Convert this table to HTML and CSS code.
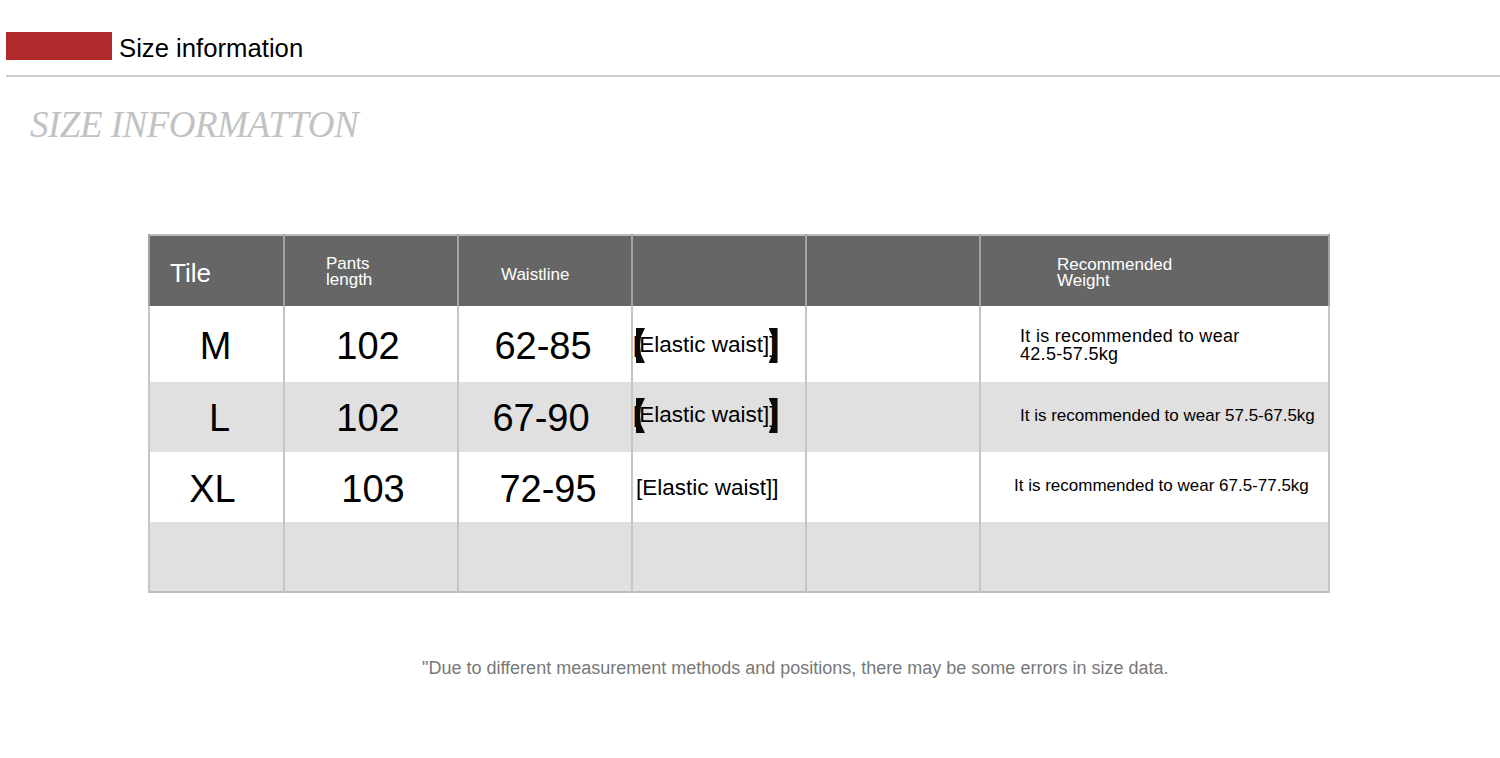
FILE: index.html
```html
<!DOCTYPE html>
<html>
<head>
<meta charset="utf-8">
<link rel="stylesheet" href="styles.css">
</head>
<body>
<div class="page">
  <div class="heading">
    <div class="red-bar"></div>
    <div class="heading-text">Size information</div>
  </div>
  <div class="rule"></div>
  <div class="subtitle">SIZE INFORMATTON</div>

  <table class="size-table">
    <colgroup>
      <col class="c1"><col class="c2"><col class="c3"><col class="c4"><col class="c5"><col class="c6">
    </colgroup>
    <thead>
      <tr class="head">
        <th class="h-tile">Tile</th>
        <th class="h-small h-pants">Pants<br>length</th>
        <th class="h-small h-waist">Waistline</th>
        <th></th>
        <th></th>
        <th class="h-small h-weight">Recommended<br>Weight</th>
      </tr>
    </thead>
    <tbody>
      <tr class="row white r1">
        <td class="val">M</td>
        <td class="val">102</td>
        <td class="val">62-85</td>
        <td class="elastic"><span class="waist bold">[Elastic waist]]</span></td>
        <td></td>
        <td class="weight w1">It is recommended to wear<br>42.5-57.5kg</td>
      </tr>
      <tr class="row grey r2">
        <td class="val">L</td>
        <td class="val">102</td>
        <td class="val">67-90</td>
        <td class="elastic e2"><span class="waist bold">[Elastic waist]]</span></td>
        <td></td>
        <td class="weight w2">It is recommended to wear 57.5-67.5kg</td>
      </tr>
      <tr class="row white r3">
        <td class="val">XL</td>
        <td class="val">103</td>
        <td class="val">72-95</td>
        <td class="elastic e3"><span class="waist">[Elastic waist]]</span></td>
        <td></td>
        <td class="weight w3">It is recommended to wear 67.5-77.5kg</td>
      </tr>
      <tr class="row grey r4">
        <td></td><td></td><td></td><td></td><td></td><td></td>
      </tr>
    </tbody>
  </table>

  <p class="note">"Due to different measurement methods and positions, there may be some errors in size data.</p>
</div>
</body>
</html>
```

FILE: styles.css
```css
html, body {
  margin: 0;
  padding: 0;
  background: #ffffff;
}

body {
  font-family: "Liberation Sans", Arial, sans-serif;
  color: #000;
}

.page {
  width: 1500px;
  height: 758px;
  overflow: hidden;
}

.heading {
  display: flex;
  align-items: center;
  padding: 32px 0 0 6px;
  height: 28px;
}

.red-bar {
  width: 106px;
  height: 28px;
  background: #b02a2c;
}

.heading-text {
  margin-left: 7px;
  font-size: 25.7px;
  line-height: 28px;
  position: relative;
  top: 2px;
}

.rule {
  margin: 15px 0 0 6px;
  height: 2px;
  background: #cbcbcb;
}

.subtitle {
  margin: 26px 0 0 30px;
  font-family: "Liberation Serif", "Times New Roman", serif;
  font-style: italic;
  font-size: 37px;
  line-height: 44px;
  color: #c2c2c2;
  letter-spacing: -0.5px;
}

.size-table {
  margin: 87px 0 0 148px;
  border-collapse: collapse;
  table-layout: fixed;
  width: 1180px;
  border: 2px solid #bdbdbd;
}

.c1 { width: 135px; }
.c2 { width: 174px; }
.c3 { width: 174px; }
.c4 { width: 174px; }
.c5 { width: 174px; }
.c6 { width: 349px; }

.size-table th,
.size-table td {
  padding: 0;
  border-left: 2px solid #c6c6c6;
  border-right: 2px solid #c6c6c6;
  vertical-align: middle;
}

.head {
  height: 71px;
  background: #666666;
}

.head th {
  color: #ffffff;
  font-weight: normal;
  text-align: left;
  border-left-color: #a3a3a3;
  border-right-color: #a3a3a3;
}

.h-tile {
  font-size: 26px;
  padding-left: 20px !important;
  padding-top: 4px !important;
}

.h-small {
  font-size: 17px;
  line-height: 16px;
}

.h-pants {
  padding-left: 41px !important;
  padding-top: 2px !important;
}

.h-waist {
  padding-left: 42px !important;
  padding-top: 8px !important;
}

.h-weight {
  padding-left: 76px !important;
  padding-top: 3px !important;
}

.row.white { background: #ffffff; }
.row.grey { background: #e0e0e0; }

.r1 { height: 76px; }
.r2 { height: 70px; }
.r3 { height: 70px; }
.r4 { height: 70px; }

.val {
  text-align: center;
  font-size: 38px;
}

.r1 .val { padding-top: 4px !important; }
.r2 .val { padding-top: 2px !important; }
.r3 .val { padding-top: 4px !important; }

.r1 .val:nth-child(1) { padding-right: 2px !important; }
.r2 .val:nth-child(1) { padding-left: 6px !important; }
.r3 .val:nth-child(1) { padding-right: 8px !important; }
.r1 .val:nth-child(2), .r2 .val:nth-child(2) { padding-right: 6px !important; }
.r3 .val:nth-child(2) { padding-left: 4px !important; }
.r1 .val:nth-child(3) { padding-right: 4px !important; }
.r2 .val:nth-child(3) { padding-right: 8px !important; }
.r3 .val:nth-child(3) { padding-left: 6px !important; }

.elastic {
  text-align: left;
  font-size: 22.5px;
  padding-left: 0 !important;
}

.r1 .elastic { padding-top: 2px !important; }
.e2 { padding-bottom: 4px !important; }
.e3 { padding-left: 3px !important; padding-top: 2px !important; }

.waist {
  position: relative;
  display: inline-block;
}

.waist.bold::before,
.waist.bold::after {
  content: "";
  position: absolute;
  top: -4px;
  width: 9px;
  height: 35px;
  background: #0a0a0a;
}

.waist.bold::before {
  left: 3px;
  clip-path: polygon(0 0, 100% 0, 55% 25%, 45% 50%, 55% 75%, 100% 100%, 0 100%);
}

.waist.bold::after {
  right: -2px;
  clip-path: polygon(0 0, 100% 0, 100% 100%, 0 100%, 45% 75%, 55% 50%, 45% 25%);
}

.weight {
  text-align: left;
  font-size: 17px;
}

.w1 {
  font-size: 18px;
  line-height: 18px;
  letter-spacing: 0.3px;
  padding-left: 39px !important;
  padding-top: 2px !important;
}

.w2 {
  padding-left: 39px !important;
  padding-bottom: 2px !important;
}

.w3 {
  padding-left: 33px !important;
  padding-bottom: 2px !important;
}

.note {
  margin: 64px 0 0 422px;
  font-size: 18px;
  line-height: 22px;
  color: #787878;
}
```
